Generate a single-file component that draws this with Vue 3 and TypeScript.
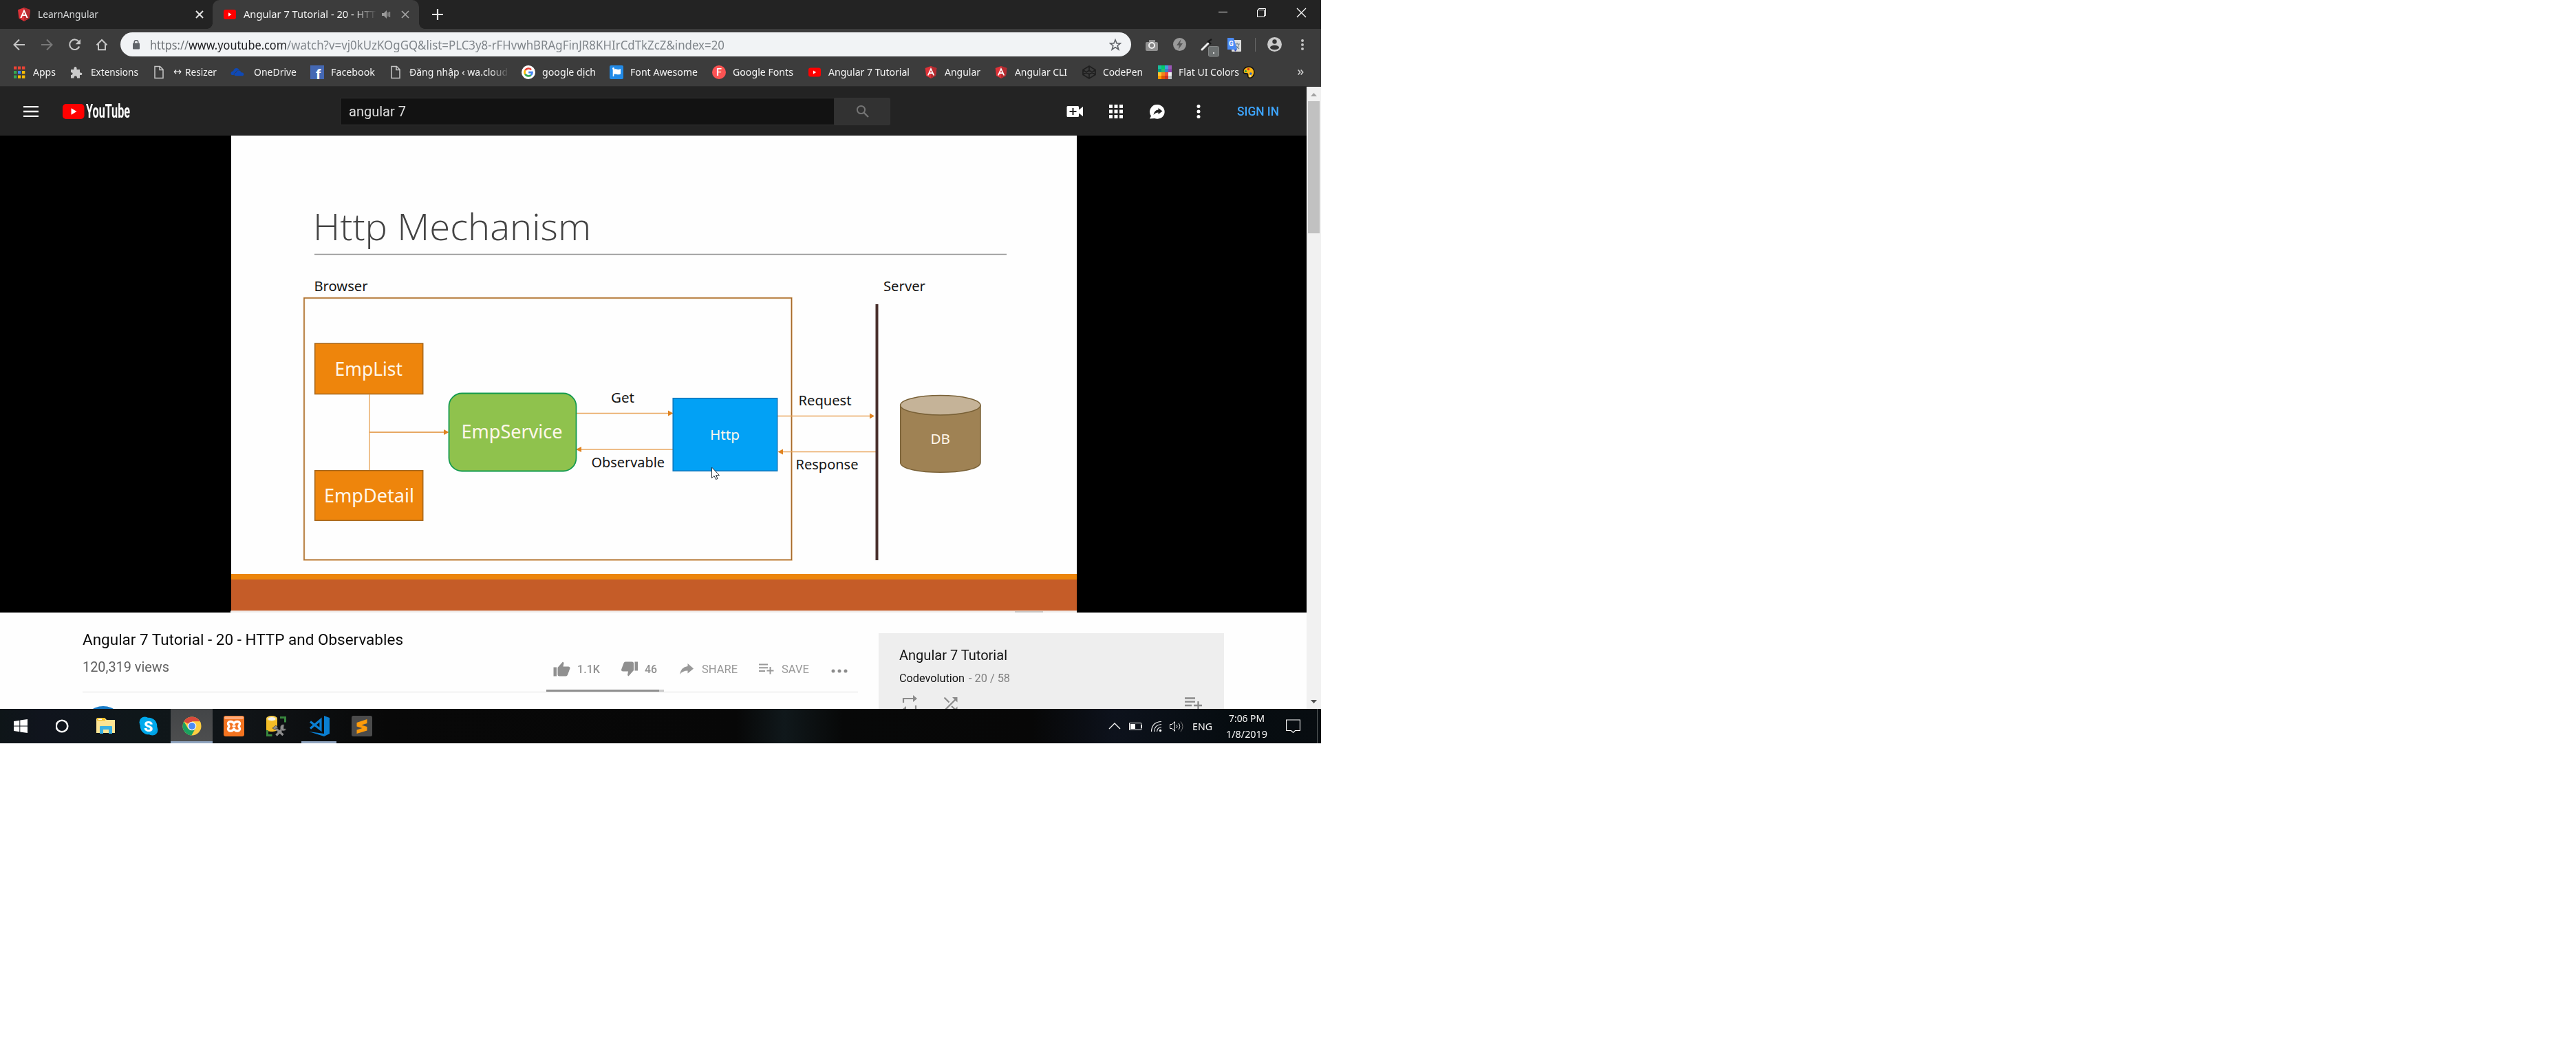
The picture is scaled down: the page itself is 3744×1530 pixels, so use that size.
<script setup lang="ts">
import { computed } from 'vue'
import type { Directive } from 'vue'

// Condenses or widens a single-line label so that it takes exactly the given width.
const vFit: Directive<HTMLElement, number> = {
  mounted(el, { value }) {
    const natural = el.getBoundingClientRect().width
    el.style.transform = `scaleX(${value / natural})`
    el.style.marginRight = `${value - natural}px`
  },
}

interface Bookmark { icon: string; start: number; text: number; label: string; width: number; faded?: boolean; arrow?: boolean }

const bookmarks: Bookmark[] = [
  { icon: 'apps', start: 18, text: 48, label: 'Apps', width: 33 },
  { icon: 'puzzle', start: 101, text: 132, label: 'Extensions', width: 69 },
  { icon: 'page', start: 221, text: 252, label: 'Resizer', width: 46, arrow: true },
  { icon: 'cloud', start: 335, text: 369, label: 'OneDrive', width: 62 },
  { icon: 'facebook', start: 451, text: 481, label: 'Facebook', width: 64 },
  { icon: 'page', start: 565, text: 595, label: 'Đăng nhập ‹ wa.cloud', width: 143, faded: true },
  { icon: 'google', start: 758, text: 788, label: 'google dịch', width: 78 },
  { icon: 'flag', start: 886, text: 916, label: 'Font Awesome', width: 98 },
  { icon: 'fonts', start: 1035, text: 1065, label: 'Google Fonts', width: 88 },
  { icon: 'youtube', start: 1174, text: 1204, label: 'Angular 7 Tutorial', width: 118 },
  { icon: 'angular', start: 1343, text: 1373, label: 'Angular', width: 52 },
  { icon: 'angular', start: 1445, text: 1475, label: 'Angular CLI', width: 76 },
  { icon: 'codepen', start: 1573, text: 1603, label: 'CodePen', width: 58 },
  { icon: 'flat', start: 1683, text: 1713, label: 'Flat UI Colors', width: 88 },
]

const bookmarkItems = computed(() =>
  bookmarks.map((b, i) => ({
    ...b,
    slot: (bookmarks[i + 1]?.start ?? 1805) - b.start,
    lead: b.text - b.start,
  })),
)

const appDots = ['#ea4335', '#ea4335', '#ea4335', '#34a853', '#4285f4', '#fbbc05', '#34a853', '#fbbc05', '#fbbc05']
const flatColors = [
  '#1abc9c', '#00c96b', '#3fa0e0', '#9b59b6',
  '#009e83', '#2eb872', '#3484c8', '#8e44ad',
  '#ffc531', '#f08519', '#f04b36', '#ecf0f1',
  '#ff9a00', '#dd5500', '#cc3322', '#bdc3c7',
]
const grid3 = [0, 1, 2, 3, 4, 5, 6, 7, 8]
</script>

<template>
  <div class="desktop">
    <!-- tab strip -->
    <div class="tabs">
      <div class="tab idle">
        <svg class="fav" width="20" height="20" viewBox="0 0 20 20">
          <path d="M10 0 19 3.2 17.6 15.6 10 20 2.4 15.6 1 3.2Z" fill="#dd3238" /><path d="M10 0 19 3.2 17.6 15.6 10 20Z" fill="#b52b30" />
          <path d="M4.3 15 10 2.2 15.7 15H13.5L12.3 12H7.7L6.5 15ZM8.5 10.2H11.5L10 6.5Z" fill="#fff" fill-rule="evenodd" />
        </svg>
        <span v-fit="88" class="ui t-idle">LearnAngular</span>
        <svg class="x1" width="12" height="12" viewBox="0 0 12 12"><path d="M1 1 11 11M11 1 1 11" stroke="#e4e4e4" stroke-width="2" /></svg>
      </div>
      <div class="tab active">
        <svg class="yt" width="18" height="14" viewBox="0 0 18 14"><rect width="18" height="14" rx="3" fill="#f00" /><path d="M7 4.3V9.7L11.5 7Z" fill="#fff" /></svg>
        <div class="clip"><span v-fit="192" class="ui">Angular 7 Tutorial - 20 - HTT</span></div>
        <svg class="snd" width="14" height="14" viewBox="0 0 14 14"><path d="M0 5H3L7 1V13L3 9H0Z" fill="#9b9b9b" /><path d="M9 4V10M11.5 3V11" stroke="#9b9b9b" stroke-width="1.3" /></svg>
        <svg class="x2" width="12" height="12" viewBox="0 0 12 12"><path d="M1 1 11 11M11 1 1 11" stroke="#a5a5a5" stroke-width="1.7" /></svg>
      </div>
      <svg class="plus" width="16" height="16" viewBox="0 0 16 16"><path d="M8 0V16M0 8H16" stroke="#e6e6e6" stroke-width="2.2" /></svg>
      <svg class="winctl" width="128" height="16" viewBox="0 0 128 16" fill="none" stroke="#fff">
        <path d="M0 6.5H13" /><path d="M56.500 3.500H66.500V13.500H56.500ZM58.500 3.500V1.500H68.500V11.500H66.500" /><path d="M114 1 127 14M127 1 114 14" stroke-width="1.300" />
      </svg>
    </div>

    <!-- toolbar -->
    <div class="toolbar">
      <svg class="nav" width="140" height="20" viewBox="0 0 140 20" fill="none" stroke="#c6c6c6" stroke-width="2">
        <path d="M17 10H2M9 2.500 1.500 10 9 17.500" />
        <path d="M41 10H56M49 2.500 56.500 10 49 17.500" stroke="#787878" />
        <path d="M95.500 5.500A7.300 7.300 0 1 0 96.300 12.500" stroke-width="2.100" /><path d="M98 2V9.300H90.700Z" fill="#c6c6c6" stroke="none" />
        <path d="M121.500 10.500 129 3 136.500 10.500M124 9V17.300H134V9" />
      </svg>
      <div class="address">
        <svg class="lock" width="10" height="14" viewBox="0 0 10 14"><rect y="4.500" width="10" height="9" rx="1" fill="#5f6368" /><path d="M2.200 5V3.200A2.800 2.500 0 0 1 7.800 3.200V5" fill="none" stroke="#5f6368" stroke-width="1.500" /></svg>
        <span v-fit="56" class="ui url scheme">https://</span>
        <span v-fit="143" class="ui url host">www.youtube.com</span>
        <span v-fit="636" class="ui url path">/watch?v=vj0kUzKOgGQ&amp;list=PLC3y8-rFHvwhBRAgFinJR8KHIrCdTkZcZ&amp;index=20</span>
        <svg class="star" width="18" height="18" viewBox="0 0 18 18"><path d="M9 1.800 11.100 7H16.500L12.200 10.400 13.800 16 9 12.700 4.200 16 5.800 10.400 1.500 7H6.900Z" fill="none" stroke="#5f6368" stroke-width="1.600" /></svg>
      </div>
      <svg class="ext" width="238" height="36" viewBox="1660 47 238 36">
        <path d="M1667 61H1670V58H1679V61H1681Q1683 61 1683 63V72Q1683 74 1681 74H1667Q1665 74 1665 72V63Q1665 61 1667 61Z" fill="#919191" /><circle cx="1674" cy="66" r="4" fill="#858585" stroke="#f2f2f2" stroke-width="2" />
        <circle cx="1714.500" cy="64.500" r="9.500" fill="#9a9a9a" /><path d="M1716.500 57 1710 66H1714L1712.500 72 1719 63H1715Z" fill="#565656" />
        <path d="M1747 72 1756 63" stroke="#ededed" stroke-width="3" stroke-linecap="round" /><path d="M1755 61 1761 57M1756 60 1760 64" stroke="#171717" stroke-width="2.400" /><rect x="1756.500" y="67.500" width="15" height="14.500" rx="2" fill="#6c7070" stroke="#858888" /><rect x="1763" y="76" width="2" height="2" fill="#ddd" />
        <rect x="1790" y="58" width="14" height="17" rx="1" fill="#dedede" /><path d="M1794 64H1802M1798 62V64M1796 71Q1800 69 1800.500 64M1795.500 66 1801 71" stroke="#6f8294" stroke-width="1.200" fill="none" /><path d="M1784 55H1793L1798 72H1784Z" fill="#4b8bf5" /><path d="M1794 72H1798L1795 75Z" fill="#3545b5" /><text x="1786" y="67" font-size="10" font-weight="700" fill="#fff" font-family="Roboto, sans-serif">G</text>
        <path d="M1824.500 55V75" stroke="#676767" />
        <circle cx="1852.500" cy="64.500" r="10.500" fill="#cacaca" /><circle cx="1852.500" cy="60.500" r="3.200" fill="#333" /><ellipse cx="1852.500" cy="69" rx="6.500" ry="3.200" fill="#333" />
        <g fill="#c3c3c3"><circle cx="1893" cy="59" r="2" /><circle cx="1893" cy="65" r="2" /><circle cx="1893" cy="71" r="2" /></g>
      </svg>
    </div>

    <!-- bookmarks -->
    <div class="bookmarks">
      <div v-for="b in bookmarkItems" :key="b.label" class="bm" :style="{ width: b.slot + 'px' }">
        <div class="bm-icon" :style="{ width: b.lead + 'px' }">
          <svg width="20" height="20" viewBox="0 0 20 20">
            <g v-if="b.icon === 'apps'"><rect v-for="(c, i) in appDots" :key="i" :x="2 + (i % 3) * 6" :y="1.500 + Math.floor(i / 3) * 6.500" width="4.300" height="4.300" :fill="c" /></g>
            <path v-else-if="b.icon === 'puzzle'" d="M2 6H6.500C5.500 0.500 11.500 0.500 10.500 6H15V10.500C19.500 9.500 19.500 15 15 14V18.500H11C11.500 14 6 14 6.500 18.500H2V14C5.500 14.500 5.500 9.500 2 10.500Z" fill="#cbcbcb" />
            <path v-else-if="b.icon === 'page'" d="M4 1.500H11.500L16 6V18.500H4ZM11 1.500V6.500H16" fill="none" stroke="#c6c6c6" stroke-width="1.500" />
            <g v-else-if="b.icon === 'cloud'"><path d="M2 14C-1 12 1 8 4 8.500 5 3.500 10 2.500 13 6.500L8 9 6 14Z" fill="#0f49b5" /><path d="M7 15.500C4 14 5 10.500 8 10.500 8.500 6 15 6 15.500 10 20 9.500 21 14 18 15.500Z" fill="#0f49b5" stroke="#3c3c3c" stroke-width=".6" /></g>
            <g v-else-if="b.icon === 'facebook'"><rect width="20" height="20" fill="#4468b3" /><text x="8" y="20" font-size="21" font-weight="700" fill="#fff" font-family="Roboto, sans-serif">f</text></g>
            <g v-else-if="b.icon === 'google'" fill="none" stroke-width="2.700"><circle cx="10" cy="10" r="10" fill="#fff" /><path d="M5.300 7.200A5.500 5.500 0 0 1 14 6.200" stroke="#ea4335" /><path d="M5.300 12.800A5.500 5.500 0 0 1 5.300 7.200" stroke="#fbbc05" /><path d="M13.800 14A5.500 5.500 0 0 1 5.300 12.800" stroke="#34a853" /><path d="M10.200 10.200H15.500A5.500 5.500 0 0 1 13.800 14" stroke="#4285f4" /></g>
            <g v-else-if="b.icon === 'flag'"><rect width="20" height="20" rx="2" fill="#228ae6" /><circle cx="5.500" cy="4.500" r="1.500" fill="#fff" /><path d="M4.700 5H6.300V16H4.700ZM6 6C9 4 11 7.500 16 5V12.500C11 15 9 11 6 13Z" fill="#fff" /></g>
            <g v-else-if="b.icon === 'fonts'"><circle cx="10" cy="10" r="10" fill="#fb5353" /><text x="6.300" y="15" font-size="14" font-weight="500" fill="#fff" font-family="Roboto, sans-serif">F</text></g>
            <g v-else-if="b.icon === 'youtube'"><rect x="1" y="3.500" width="18" height="13" rx="3" fill="#f00" /><path d="M8 7.500V12.500L12.200 10Z" fill="#fff" /></g>
            <g v-else-if="b.icon === 'angular'"><path d="M10 1 18.300 4 17 15 10 19 3 15 1.700 4Z" fill="#dd3238" /><path d="M10 1 18.300 4 17 15 10 19Z" fill="#b52b30" /><path d="M4.800 14.500 10 3 15.200 14.500H13.200L12.100 12H7.900L6.800 14.500ZM8.600 10.300H11.400L10 7Z" fill="#fff" fill-rule="evenodd" /></g>
            <path v-else-if="b.icon === 'codepen'" d="M10 1 19 6.500V13.500L10 19 1 13.500V6.500ZM1 6.500 10 13 19 6.500M1 13.500 10 7 19 13.500M10 1V7M10 13V19" fill="none" stroke="#1f1f1f" stroke-width="1.700" />
            <g v-else><rect v-for="(c, i) in flatColors" :key="i" :x="(i % 4) * 5" :y="Math.floor(i / 4) * 5" width="5" height="5" :fill="c" /></g>
          </svg>
        </div>
        <span v-if="b.arrow" v-fit="12" class="ui arrow">↔</span>
        <span v-fit="b.width" class="ui" :class="{ faded: b.faded }">{{ b.label }}</span>
      </div>
      <svg class="palette" width="20" height="20" viewBox="0 0 20 20"><path d="M10 2C4 2 1 7 2 10 3 13 6 11 8 12 10 13.500 7 16 10 18 14 19.500 18 15 18 10 18 5 14.500 2 10 2Z" fill="#fbb714" stroke="#111" stroke-width="1.500" /><circle cx="9.500" cy="5.500" r="1.700" fill="#d63b1f" /><circle cx="5.500" cy="8.500" r="1.600" fill="#2ea043" /><circle cx="12.800" cy="12" r="1.800" fill="#1f62d8" /><circle cx="12" cy="15.500" r="1.200" fill="#f4e9c8" /></svg>
      <svg class="more" width="9" height="10" viewBox="0 0 9 10"><path d="M.7 1.500 3.700 5 .7 8.500M4.700 1.500 7.700 5 4.700 8.500" fill="none" stroke="#d0d0d0" stroke-width="1.600" /></svg>
    </div>

    <div class="viewport">
      <div class="page">
        <!-- masthead -->
        <div class="mast">
          <svg class="burger" width="22" height="16" viewBox="0 0 22 16"><path d="M0 1H22M0 8H22M0 15H22" stroke="#fff" stroke-width="2.300" /></svg>
          <svg class="logo" width="32" height="22" viewBox="0 0 32 22"><rect width="31.500" height="22" rx="5" fill="#f00" /><path d="M12.500 6.300V15.700L20.500 11Z" fill="#fff" /></svg>
          <span v-fit="64" class="wordmark">YouTube</span>
          <div class="search"><span v-fit="83" class="query">angular 7</span></div>
          <div class="go"><svg width="20" height="20" viewBox="0 0 20 20" fill="none" stroke="#757575" stroke-width="2"><circle cx="7.500" cy="7.500" r="5.600" /><path d="M11.600 11.600 18 18" stroke-width="2.400" /></svg></div>
          <svg class="acts" width="200" height="24" viewBox="1550 150 200 24" fill="#fff">
            <path d="M1552 154H1566.500Q1568 154 1568 155.500V159.500L1574 155V169L1568 164.500V168.500Q1568 170 1566.500 170H1552Q1550.500 170 1550.500 168.500V155.500Q1550.500 154 1552 154Z" /><path d="M1559.500 157V167M1554.500 162H1564.500" stroke="#232323" stroke-width="2" />
            <rect v-for="i in grid3" :key="i" :x="1612 + (i % 3) * 7.500" :y="152 + Math.floor(i / 3) * 7.500" width="5" height="5" />
            <path d="M1682.500 152A10.600 10.400 0 1 1 1678 172L1671 172.500 1673 168.500A10.500 10.500 0 0 1 1682.500 152Z" /><path d="M1676.500 167Q1678 159.500 1683.500 159.500V157L1689.500 161.500 1683.500 166V163.500Q1679 163.500 1676.500 167Z" fill="#232323" />
            <circle cx="1742" cy="154.500" r="2.500" /><circle cx="1742" cy="162" r="2.500" /><circle cx="1742" cy="169.500" r="2.500" />
          </svg>
          <span v-fit="61" class="signin">SIGN IN</span>
        </div>

        <!-- player -->
        <div class="player">
          <svg class="slide" width="1230" height="693" viewBox="335 197 1230 693">
            <rect x="336" y="197" width="1229" height="693" fill="#fefefe" />
            <rect x="336" y="834" width="1229" height="9" fill="#ec850c" />
            <rect x="336" y="842" width="1229" height="45.500" fill="#c55c28" />
            <rect x="335" y="887.500" width="1230" height="2.500" fill="#f0ecea" />
            <rect x="1475" y="888" width="41" height="2" fill="#c9c7c6" />
            <path d="M457 369.500H1463" stroke="#929292" stroke-width="1.600" />
            <rect x="442" y="433" width="708.500" height="380.500" fill="none" stroke="#e9c69c" stroke-width="2.600" />
            <rect x="442" y="433" width="708.500" height="380.500" fill="none" stroke="#a5692a" stroke-width="1.300" />
            <g fill="#ee850c" stroke="#a5651a" stroke-width="1.500">
              <rect x="457.700" y="499" width="157" height="73.500" /><rect x="457.700" y="683.700" width="157" height="72.500" />
            </g>
            <g stroke="#e9a860" stroke-width="1.400" fill="none"><path d="M537 573V683M838 600.500H971M978 653H845M1130 604.500H1264M1273 656.500H1138" /></g>
            <path d="M537 628H646" stroke="#df8b31" stroke-width="1.500" />
            <path d="M645 624 652.500 628 645 632ZM971 596.500 978.500 600.500 971 604.500ZM845 649 837 653 845 657ZM1264 600.500 1271 604.500 1264 608.500ZM1138 652.500 1130.500 656.500 1138 660.500Z" fill="#e08320" />
            <rect x="652.500" y="571.500" width="185" height="113" rx="19" fill="#8fc24d" stroke="#159b4f" stroke-width="1.800" />
            <rect x="978.200" y="578.700" width="151.500" height="105.500" fill="#02a1f5" stroke="#0c75ba" stroke-width="1.500" />
            <path d="M1274.500 442V814" stroke="#482f2c" stroke-width="4" />
            <path d="M1308.700 589V672C1308.700 691 1425 691 1425 672V589" fill="#9f8254" stroke="#796137" stroke-width="1.500" />
            <ellipse cx="1366.800" cy="588.700" rx="58.200" ry="14.200" fill="#c5b398" stroke="#796137" stroke-width="1.500" />
            <g class="stext">
              <text class="heading" x="455" y="348.800" font-size="53" fill="#434343" textLength="404" lengthAdjust="spacingAndGlyphs">Http Mechanism</text>
              <g font-size="20" fill="#151515">
                <text x="456.500" y="422.500" textLength="78" lengthAdjust="spacingAndGlyphs">Browser</text>
                <text x="1284" y="423" textLength="61" lengthAdjust="spacingAndGlyphs">Server</text>
                <text x="888" y="584.500" textLength="34" lengthAdjust="spacingAndGlyphs">Get</text>
                <text x="859.500" y="679" textLength="106.500" lengthAdjust="spacingAndGlyphs">Observable</text>
                <text x="1160.500" y="588.700" textLength="77" lengthAdjust="spacingAndGlyphs">Request</text>
                <text x="1156.500" y="682.300" textLength="91" lengthAdjust="spacingAndGlyphs">Response</text>
              </g>
              <g fill="#fff7ea">
                <text x="486.500" y="546" font-size="26.500" textLength="98.500" lengthAdjust="spacingAndGlyphs">EmpList</text>
                <text x="471" y="730" font-size="26.500" textLength="131" lengthAdjust="spacingAndGlyphs">EmpDetail</text>
                <text x="670.500" y="637" font-size="26.500" textLength="147" lengthAdjust="spacingAndGlyphs">EmpService</text>
                <text x="1032" y="638.700" font-size="19.500" textLength="43" lengthAdjust="spacingAndGlyphs">Http</text>
                <text x="1352.500" y="645" font-size="19.500" textLength="28.500" lengthAdjust="spacingAndGlyphs">DB</text>
              </g>
            </g>
            <path d="M1034.500 679V694.500L1038 691.500 1040.500 696.500 1043 695.500 1040.500 690.500H1045.500Z" fill="#fff" stroke="#273038" stroke-width="1" />
          </svg>
        </div>

        <!-- below the player -->
        <div class="below">
          <div class="info">
            <div class="title"><span v-fit="466">Angular 7 Tutorial - 20 - HTTP and Observables</span></div>
            <div class="row">
              <span v-fit="126" class="views">120,319 views</span>
              <svg class="like" width="25" height="22" viewBox="0 0 25 22" fill="#909090"><path d="M.5 8.500H5V21.500H.5ZM6.500 9 14 0.500 15.500 2 14.500 7.500H22Q24.500 7.500 24.500 10L21 19.500Q20.300 21.500 18.500 21.500H9Q6.500 21.500 6.500 19Z" /></svg>
              <span v-fit="33" class="act likes">1.1K</span>
              <svg class="dislike" width="25" height="22" viewBox="0 0 25 22" fill="#909090"><path d="M19.500 .5H24V13.500H19.500ZM18 13 10.500 21.500 9 20 10 14.500H2.500Q0 14.500 0 12L3.500 2.500Q4.300 .5 6 .5H15.500Q18 .5 18 3Z" /></svg>
              <span v-fit="18" class="act dis">46</span>
              <svg class="share" width="20" height="16" viewBox="0 0 20 16"><path d="M11.500 0 20 7.500 11.500 14.500V10.500Q4 10.500 0 16 1.500 5.500 11.500 4Z" fill="#999" /></svg>
              <span v-fit="52" class="act light sh">SHARE</span>
              <svg class="save" width="22" height="16" viewBox="0 0 22 16"><path d="M0 1.500H13M0 6.300H13M0 11H9M16.500 5V15.500M11.500 10.500H21.500" stroke="#999" stroke-width="2" /></svg>
              <span v-fit="40" class="act light sv">SAVE</span>
              <svg class="dots" width="24" height="6" viewBox="0 0 24 6" fill="#8c8c8c"><circle cx="3" cy="3" r="2.500" /><circle cx="12" cy="3" r="2.500" /><circle cx="21" cy="3" r="2.500" /></svg>
            </div>
            <div class="rating"><i class="up"></i><i class="down"></i></div>
            <div class="avatar"></div>
          </div>
          <div class="panel">
            <div class="p-title"><span v-fit="157">Angular 7 Tutorial</span></div>
            <div class="p-sub"><span v-fit="95">Codevolution</span><span v-fit="60" class="count">- 20 / 58</span></div>
            <div class="p-icons">
              <svg width="24" height="26" viewBox="0 0 24 26"><path d="M3 11V5H18M21 15V21H6" fill="none" stroke="#8b8b8b" stroke-width="2.200" /><path d="M17 0 23 5 17 10ZM7 16 1 21 7 26Z" fill="#8b8b8b" /></svg>
              <svg class="shuf" width="22" height="24" viewBox="0 0 22 24"><path d="M1.500 2.500 8.500 9.500M1.500 21.500 19 4M12 15 19 21.500" fill="none" stroke="#8b8b8b" stroke-width="2.200" /><path d="M13 2H20.500V9.500ZM20.500 15.500V23H13Z" fill="#8b8b8b" /></svg>
              <svg class="padd" width="26" height="20" viewBox="0 0 26 20"><path d="M0 1.500H15M0 6.700H15M0 12H10M19.500 6V18M13 12H25" stroke="#8b8b8b" stroke-width="2.300" /></svg>
            </div>
          </div>
        </div>
      </div>
      <!-- scrollbar -->
      <div class="scroll">
        <svg width="21" height="21" viewBox="0 0 21 21"><path d="M6 14 10.500 9 15 14Z" fill="#a3a3a3" /></svg>
        <div class="thumb"></div>
        <svg class="dn" width="21" height="21" viewBox="0 0 21 21"><path d="M6 8 10.500 13 15 8Z" fill="#505050" /></svg>
      </div>
    </div>

    <!-- taskbar -->
    <div class="taskbar">
      <div class="slot s60"><svg width="20" height="20" viewBox="0 0 20 20" fill="#fff"><path d="M0 3 8.300 1.700V9.500H0ZM9.300 1.500 20 0V9.500H9.300ZM0 10.500H8.300V18.300L0 17ZM9.300 10.500H20V20L9.300 18.500Z" /></svg></div>
      <div class="slot s62"><svg width="20" height="20" viewBox="0 0 20 20"><circle cx="9" cy="10" r="8.300" fill="none" stroke="#f5f5f5" stroke-width="2.600" /></svg></div>
      <div class="slot s64"><svg width="28" height="24" viewBox="0 0 28 24"><path d="M0 1H13L15 3H27V22H0Z" fill="#fde493" /><path d="M1 0H13V4H1Z" fill="#f5c12b" /><path d="M3 1.500H8V3H3Z" fill="#fff" /><path d="M5 13Q5 12 6 12H22Q23 12 23 13V23H18V17H10V23H5Z" fill="#3ab1e4" /></svg></div>
      <div class="slot s60"><svg width="28" height="28" viewBox="0 0 28 28"><circle cx="8.500" cy="8.500" r="8" fill="#00a9ec" /><circle cx="19.500" cy="19.500" r="8" fill="#009fe2" /><circle cx="14" cy="14" r="12.300" fill="#00a9ec" /><text x="7" y="21.500" font-size="21" font-weight="900" fill="#fff" font-family="Roboto, sans-serif">S</text></svg></div>
      <div class="slot on">
        <svg width="28" height="28" viewBox="0 0 28 28"><circle cx="14" cy="14" r="13.500" fill="#ffcd41" /><path d="M14 14 2.300 7.200A13.500 13.500 0 0 1 25.700 7.200H14Z" fill="#da4a3c" /><path d="M2.300 7.200 8.200 17.400 14 20 13.300 27.500A13.500 13.500 0 0 1 2.300 7.200Z" fill="#1ba160" /><path d="M19 17.500 13.300 27.500 10.500 19Z" fill="#1ba160" /><path d="M14 7.500H25.800L26.500 9 20 12Z" fill="#ffcd41" /><circle cx="14" cy="14" r="6.300" fill="#f4f4f4" /><circle cx="14" cy="14" r="4.900" fill="#4c8bf5" /></svg>
      </div>
      <div class="slot s62"><svg width="30" height="30" viewBox="0 0 30 30"><rect width="30" height="30" rx="3" fill="#f47420" /><rect x="1" y="1" width="28" height="4" rx="2" fill="#ffab7b" /><path d="M15 11.500C13.500 8 6.500 7 6.500 11.500 6.500 13.500 8 14 8 15.200 8 16.500 6.500 17 6.500 19 6.500 23.500 13.500 22.500 15 19 16.500 22.500 23.500 23.500 23.500 19 23.500 17 22 16.500 22 15.200 22 14 23.500 13.500 23.500 11.500 23.500 7 16.500 8 15 11.500Z" fill="#f47420" stroke="#fff" stroke-width="3.400" stroke-linejoin="round" /><path d="M12.500 15.200H17.500" stroke="#fff" stroke-width="2.600" /></svg></div>
      <div class="slot s62"><svg width="30" height="30" viewBox="0 0 30 30"><path d="M0 4V20C0 24 16 24 16 20V4Z" fill="#f3bd27" /><ellipse cx="8" cy="4" rx="8" ry="4" fill="#f8cf4e" /><ellipse cx="8" cy="4.500" rx="5.500" ry="2.500" fill="#efefef" /><path d="M20 2.500H27.500V9.500M1.500 21V28.500H8.500" fill="none" stroke="#38873e" stroke-width="3" /><path d="M14.500 28.500 25 17.500M12 17 24.500 28" stroke="#8e8e8e" stroke-width="3.400" /><path d="M9 18 14 14 17 17 12 20ZM26 13A4.500 4.500 0 1 0 29 19L25 19Z" fill="#8e8e8e" stroke="#333" stroke-width=".7" /></svg></div>
      <div class="slot s62 vs"><svg width="30" height="30" viewBox="0 0 30 30"><path d="M22 0 30 3V26L22 30 0 23 22 26Z" fill="#0a7fd2" /><path d="M2 8.500 17 20V6L2 18.500" fill="none" stroke="#0a7fd2" stroke-width="3.200" /></svg></div>
      <div class="slot s62"><svg width="30" height="30" viewBox="0 0 30 30"><rect width="30" height="30" rx="2.500" fill="#4b4b4b" /><path d="M22.500 5V11L14.500 13.500 22.500 16V21.500L7.500 26V20.500L15.500 18 7.500 15.500V10Z" fill="#ff9b0a" /></svg></div>
      <svg class="tray" width="110" height="22" viewBox="1611 1044 110 22" fill="none" stroke="#f4f4f4">
        <path d="M1612 1059 1620 1051 1628 1059" stroke-width="1.400" />
        <path d="M1641.500 1050.500H1658.500V1060.500H1641.500ZM1659.500 1053V1058" /><path d="M1643 1052H1650V1059H1643Z" fill="#fff" stroke="none" />
        <path d="M1673.500 1063Q1674 1049 1688 1048.500M1677.500 1063Q1678 1053 1688 1052.500M1681.500 1063Q1682 1057 1688 1056.500" stroke-width="1.200" /><circle cx="1686.500" cy="1061.500" r="1.700" fill="#fff" stroke="none" />
        <path d="M1700.500 1052.500H1703.500L1707.500 1048.500V1062.500L1703.500 1058.500H1700.500ZM1710 1053Q1712 1055.500 1710 1058M1713 1051Q1716.500 1055.500 1713 1060" /><path d="M1716 1048.500Q1722 1055.500 1716 1063" stroke="#777" />
      </svg>
      <span v-fit="29" class="ui lang">ENG</span>
      <div class="clock"><span v-fit="52" class="ui">7:06 PM</span><span v-fit="60" class="ui">1/8/2019</span></div>
      <svg class="note" width="21" height="21" viewBox="0 0 21 21"><path d="M.5 1H20.500V16.500H13.500L10.500 19.500 7.500 16.500H.5Z" fill="none" stroke="#fff" stroke-width="1.200" /></svg>
      <i class="peek"></i>
    </div>
  </div>
</template>

<style>
body { background: #fff; }
</style>

<style scoped>
.desktop { width: 1920px; height: 1080px; overflow: hidden; background: #3c3c3c; font-family: Roboto, sans-serif; }
svg { display: block; flex: none; }
span { display: inline-block; white-space: nowrap; transform-origin: left center; flex: none; }
.ui { font-family: "Noto Sans", sans-serif; font-size: 15px; line-height: 20px; color: #f4f4f4; }

.tabs { display: flex; align-items: center; height: 42px; background: #232323; }
.tab { display: flex; align-items: center; height: 42px; box-sizing: border-box; flex: none; }
.idle { width: 309px; padding-left: 25px; }
.t-idle { margin-left: 10px; color: #d8dadb; }
.x1 { margin-left: auto; margin-right: 13px; }
.active { width: 300px; padding-left: 16px; background: #3c3c3c; border-radius: 10px 10px 0 0; position: relative; }
.active::before, .active::after { content: ""; position: absolute; bottom: 0; width: 8px; height: 8px; }
.active::before { left: -8px; background: radial-gradient(circle at 0 0, transparent 7.5px, #3c3c3c 8px); }
.active::after { right: -8px; background: radial-gradient(circle at 100% 0, transparent 7.5px, #3c3c3c 8px); }
.clip { display: flex; margin-left: 11px; width: 192px; mask-image: linear-gradient(90deg, #000 160px, transparent 194px); }
.tab .ui, .bm .ui { position: relative; top: -1px; }
.snd { margin-left: 9px; }
.x2 { margin-left: 14px; }
.plus { margin-left: 19px; }
.winctl { margin-left: auto; margin-right: 21px; margin-top: -5px; }

.toolbar { display: flex; height: 45px; align-items: center; background: #3c3c3c; }
.nav { margin-left: 19px; }
.address { margin-left: 16px; width: 1469px; height: 35px; border-radius: 18px; background: #f1f3f5; display: flex; align-items: center; box-sizing: border-box; padding: 0 14px 0 18px; }
.lock { margin-right: 15px; }
.url { font-size: 17.5px; line-height: 24px; }
.scheme { color: #707478; }
.host { color: #202124; }
.path { color: #80868b; }
.star { margin-left: auto; }
.ext { margin-left: 16px; }

.bookmarks { display: flex; align-items: center; height: 39px; padding-left: 18px; border-bottom: 1px solid #2a2a2a; box-sizing: border-box; padding-bottom: 2px; }
.bm { display: flex; align-items: center; flex: none; }
.bm-icon { flex: none; }
.bm .arrow { font-family: "DejaVu Sans", sans-serif; padding-right: 0; left: 0; }
.arrow + .ui { left: 5px; }
.faded { mask-image: linear-gradient(90deg, #000 82%, rgba(0, 0, 0, 0.1)); }
.more { margin-left: auto; margin-right: 25px; }

.viewport { display: flex; height: 904px; }
.page { width: 1899px; background: #fff; }
.mast { display: flex; align-items: center; height: 71px; background: #232323; }
.burger { margin-left: 34px; }
.logo { margin-left: 35px; }
.wordmark { margin-left: 2px; font-size: 27px; line-height: 36px; font-weight: 700; color: #fff; }
.search { margin-left: 305px; width: 719px; height: 40px; box-sizing: border-box; background: #121212; border: 1px solid #303030; border-radius: 2px 0 0 2px; display: flex; align-items: center; padding-left: 12px; }
.query { font-size: 20px; line-height: 26px; color: #dedede; }
.go { width: 81px; height: 40px; background: #323232; border-radius: 0 2px 2px 0; display: flex; align-items: center; justify-content: center; }
.acts { margin-left: 256px; }
.signin { margin-left: 48px; font-size: 17.5px; line-height: 24px; font-weight: 500; color: #3ea6ff; }

.player { height: 693px; background: #000; display: flex; }
.slide { margin-left: 335px; }
.stext { font-family: "Noto Sans", sans-serif; font-variant-ligatures: none; }
.heading { font-family: "Open Sans", "Noto Sans", sans-serif; font-weight: 300; }

.below { display: flex; height: 140px; overflow: hidden; background: #fefefe; }
.info { margin-left: 120px; width: 1127px; flex: none; }
.title { margin-top: 25px; height: 28px; font-size: 22.5px; line-height: 28px; color: #0a0a0a; }
.row { display: flex; align-items: center; height: 30px; margin-top: 14px; }
.views { font-size: 20px; line-height: 26px; color: #606060; margin-top: -6px; }
.act { font-size: 16.25px; line-height: 20px; color: #909090; font-weight: 500; margin-top: 1px; }
.act.light { color: #999; font-weight: 400; }
.like { margin-left: 558px; }
.likes { margin-left: 10px; }
.dislike { margin-left: 31px; }
.dis { margin-left: 9px; }
.share { margin-left: 33px; }
.sh { margin-left: 12px; }
.save { margin-left: 31px; }
.sv { margin-left: 11px; }
.dots { margin-left: 32px; margin-top: 5px; }
.rating { display: flex; height: 3px; margin-top: 15px; padding-left: 674px; border-bottom: 1px solid #e0e0e0; }
.up { width: 164px; background: #909090; }
.down { width: 7px; background: #ccc; }
.avatar { width: 60px; height: 60px; border-radius: 50%; background: #167ac6; margin-top: 20px; }
.panel { margin-left: 30px; margin-top: 30px; width: 502px; height: 120px; box-sizing: border-box; background: #eee; padding: 17px 31px 0 30px; flex: none; }
.p-title { font-size: 20px; line-height: 30px; color: #111; }
.p-sub { display: flex; gap: 6px; font-size: 16.25px; line-height: 22px; margin-top: 8px; color: #111; }
.count { color: #808080; }
.p-icons { display: flex; margin-top: 13px; padding-left: 3px; align-items: flex-start; }
.shuf { margin-left: 37px; margin-top: 1px; }
.padd { margin-left: auto; margin-top: 3px; }

.scroll { width: 21px; background: #f1f1f1; display: flex; flex-direction: column; }
.thumb { width: 17px; height: 192px; margin-left: 2px; background: #c1c1c1; }
.dn { margin-top: auto; }

.taskbar { display: flex; align-items: center; height: 50px; background: linear-gradient(90deg, #0e1518 0, #10141d 60px, #0f171a 200px, #101417 360px, #080808 560px, #070707 1070px, #10181b 1140px, #070808 1225px, #070707 1500px, #0d121c 1620px, #060c10 1790px, #080d11 1920px); }
.slot { height: 50px; display: flex; align-items: center; justify-content: center; flex: none; box-sizing: border-box; }
.s60 { width: 60px; }
.s62 { width: 62px; }
.s64 { width: 64px; }
.on { width: 61px; margin-left: 2px; background: linear-gradient(#434547, #4d4e4f); border-bottom: 3px solid #8fa4bf; padding-top: 2px; }
.vs { position: relative; }
.vs::after { content: ""; position: absolute; left: 5px; bottom: 0; width: 51px; height: 3px; background: #8fa4bf; }
.tray { margin-left: 1054px; }
.lang { margin-left: 12px; }
.clock { margin-left: 20px; width: 61px; display: flex; flex-direction: column; align-items: flex-start; gap: 3px; margin-top: -1px; }
.clock .ui:first-child { margin-left: 4px; }
.note { margin-left: auto; margin-right: 24px; }
.peek { width: 1px; height: 50px; background: #5b5f61; margin-right: 5px; }
</style>
